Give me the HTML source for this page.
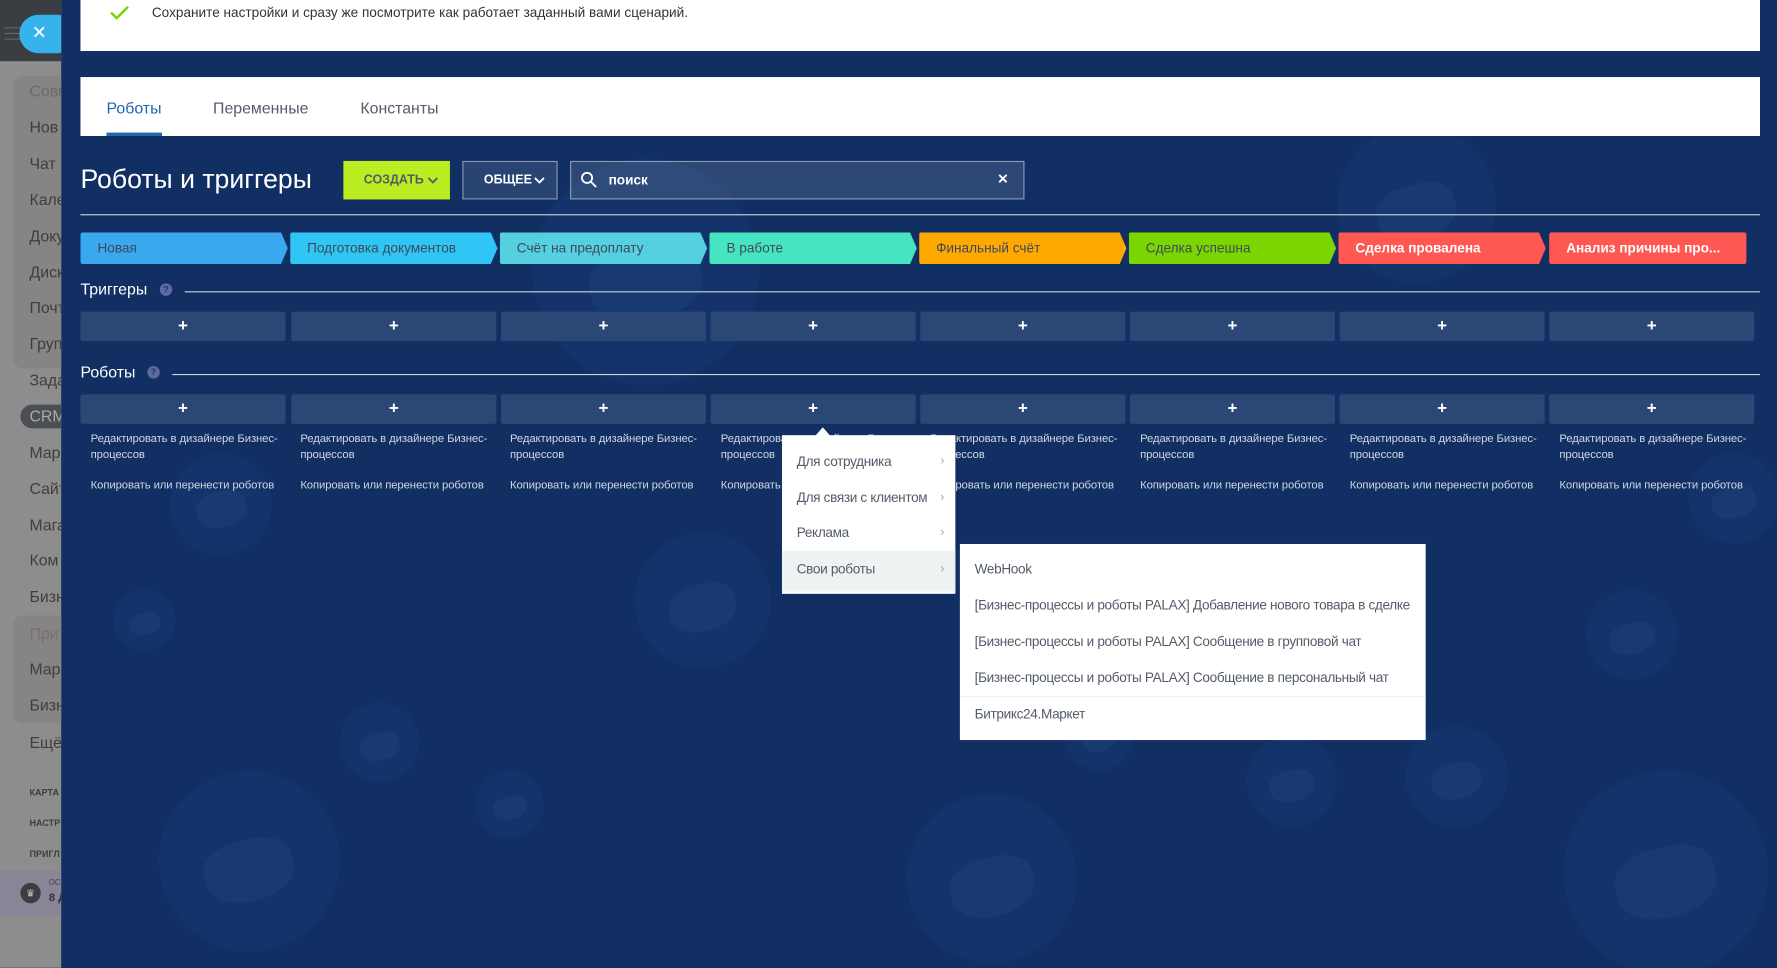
<!DOCTYPE html>
<html><head><meta charset="utf-8">
<style>
html,body{margin:0;padding:0;width:1777px;height:968px;overflow:hidden;background:#112f63;}
#s{position:absolute;left:0;top:0;width:1568px;height:854px;transform:scale(1.13329);transform-origin:0 0;font-family:"Liberation Sans",sans-serif;overflow:hidden;background:#112f63;}
.a{position:absolute;}
.side{left:0;top:0;width:54px;height:854px;background:#8d8d8d;overflow:hidden;}
.side .it{position:absolute;left:26px;font-size:14px;color:#3e3e3e;white-space:nowrap;}
.side .sm{position:absolute;left:26px;font-size:8px;font-weight:bold;color:#3e3e3e;white-space:nowrap;}
.wm{position:absolute;border-radius:50%;background:#13336a;}
.wm i{position:absolute;left:25%;top:38%;width:50%;height:34%;background:#183a70;border-radius:40% 40% 45% 45%;transform:rotate(-15deg);}
.stage{position:absolute;top:205px;height:28px;width:183px;font-size:12px;line-height:28px;padding-left:15px;box-sizing:border-box;color:#3e4a5a;clip-path:polygon(0 0,calc(100% - 6px) 0,100% 50%,calc(100% - 6px) 100%,0 100%);border-radius:2px;white-space:nowrap;}
.box{position:absolute;height:26px;width:181px;background:#2a4775;border-radius:2px;color:#fff;font-size:15px;font-weight:bold;text-align:center;line-height:26px;}
.lk{position:absolute;font-size:10px;color:#d0d7e2;line-height:14px;width:170px;letter-spacing:-0.1px;}
.mi{position:absolute;left:0;width:153px;height:32px;line-height:32px;padding-left:13px;box-sizing:border-box;font-size:12px;color:#535c69;letter-spacing:-0.3px;}
.mi b{position:absolute;right:10px;top:0;font-weight:normal;color:#a0a6ad;font-size:11px;}
.si{position:absolute;left:13px;font-size:12px;color:#535c69;white-space:nowrap;letter-spacing:-0.3px;}
</style></head><body>
<div id="s">
<div class="wm" style="left:470px;top:140px;width:200px;height:200px"><i></i></div>
<div class="wm" style="left:1180px;top:110px;width:140px;height:140px"><i></i></div>
<div class="wm" style="left:560px;top:470px;width:120px;height:120px"><i></i></div>
<div class="wm" style="left:140px;top:680px;width:160px;height:160px"><i></i></div>
<div class="wm" style="left:800px;top:700px;width:150px;height:150px"><i></i></div>
<div class="wm" style="left:1380px;top:680px;width:180px;height:180px"><i></i></div>
<div class="wm" style="left:150px;top:400px;width:90px;height:90px"><i></i></div>
<div class="wm" style="left:300px;top:620px;width:70px;height:70px"><i></i></div>
<div class="wm" style="left:1100px;top:650px;width:80px;height:80px"><i></i></div>
<div class="wm" style="left:1240px;top:640px;width:90px;height:90px"><i></i></div>
<div class="wm" style="left:420px;top:680px;width:60px;height:60px"><i></i></div>
<div class="wm" style="left:100px;top:520px;width:55px;height:55px"><i></i></div>
<div class="wm" style="left:1400px;top:520px;width:80px;height:80px"><i></i></div>
<div class="wm" style="left:940px;top:620px;width:60px;height:60px"><i></i></div>
<div class="wm" style="left:1490px;top:400px;width:80px;height:80px"><i></i></div>

<div class="a side">
 <div class="a" style="left:0;top:0;width:54px;height:54px;background:#3a3d42"></div>
 <div class="a" style="left:4px;top:24px;width:14px;height:1px;background:#666"></div>
 <div class="a" style="left:4px;top:29px;width:14px;height:1px;background:#666"></div>
 <div class="a" style="left:4px;top:34px;width:14px;height:1px;background:#666"></div>
 <div class="a" style="left:17px;top:13px;width:50px;height:34px;border-radius:17px;background:#36b3ea;color:#fff;font-size:16px;line-height:33px;padding-left:11px;box-sizing:border-box">✕</div>
 <div class="a" style="left:12px;top:67px;width:60px;height:258px;background:#858585;border-radius:8px"></div>
 <div class="a" style="left:12px;top:543px;width:60px;height:95px;background:#858585;border-radius:8px"></div>
 <div class="it" style="top:72px;color:#6a6a6a">Совм</div>
 <div class="it" style="top:104px">Нов</div>
 <div class="it" style="top:136px">Чат</div>
 <div class="it" style="top:168px">Кале</div>
 <div class="it" style="top:200px">Доку</div>
 <div class="it" style="top:232px">Диск</div>
 <div class="it" style="top:263px">Почт</div>
 <div class="it" style="top:295px">Груп</div>
 <div class="it" style="top:327px">Зада</div>
 <div class="a" style="left:18px;top:357px;width:50px;height:21px;border-radius:11px;background:#4b4e53"></div>
 <div class="it" style="top:359px;color:#aaa">CRM</div>
 <div class="it" style="top:391px">Мар</div>
 <div class="it" style="top:423px">Сайт</div>
 <div class="it" style="top:455px">Мага</div>
 <div class="it" style="top:486px">Ком</div>
 <div class="it" style="top:518px">Бизн</div>
 <div class="it" style="top:551px;color:#7a6e6e">При</div>
 <div class="it" style="top:582px">Мар</div>
 <div class="it" style="top:614px">Бизн</div>
 <div class="it" style="top:647px">Ещё</div>
 <div class="sm" style="top:695px">КАРТА</div>
 <div class="sm" style="top:722px">НАСТР</div>
 <div class="sm" style="top:749px">ПРИГЛ</div>
 <div class="a" style="left:0;top:768px;width:54px;height:40px;background:#8a8596"></div>
 <div class="a" style="left:18px;top:779px;width:18px;height:18px;border-radius:50%;background:#3a3d42;color:#ccc;font-size:9px;text-align:center;line-height:18px">♛</div>
 <div class="a" style="left:43px;top:776px;font-size:7px;color:#444;white-space:nowrap">ОС</div>
 <div class="a" style="left:43px;top:787px;font-size:10px;font-weight:bold;color:#333;white-space:nowrap">8 Д</div>
</div>

<div class="a" style="left:71px;top:0;width:1482px;height:45px;background:#fff"></div>
<svg class="a" style="left:97px;top:4px" width="18" height="14"><path d="M1 7 L6 12 L16 2" fill="none" stroke="#7bd500" stroke-width="2.2"/></svg>
<div class="a" style="left:134px;top:4px;font-size:12px;color:#333">Сохраните настройки и сразу же посмотрите как работает заданный вами сценарий.</div>

<div class="a" style="left:71px;top:68px;width:1482px;height:52px;background:#fff"></div>
<div class="a" style="left:94px;top:87px;font-size:14px;color:#2067b0">Роботы</div>
<div class="a" style="left:94px;top:117px;width:49px;height:3px;background:#2067b0"></div>
<div class="a" style="left:188px;top:87px;font-size:14px;color:#535c69">Переменные</div>
<div class="a" style="left:318px;top:87px;font-size:14px;color:#535c69">Константы</div>

<div class="a" style="left:71px;top:145px;font-size:23.5px;color:#fff">Роботы и триггеры</div>
<div class="a" style="left:303px;top:142px;width:94px;height:34px;background:#bbed21;color:#535c69;font-size:11px;font-weight:bold;line-height:34px;padding-left:18px;box-sizing:border-box">СОЗДАТЬ</div>
<svg class="a" style="left:377px;top:155px" width="10" height="8"><path d="M1 2 L5 6 L9 2" fill="none" stroke="#535c69" stroke-width="1.6"/></svg>
<div class="a" style="left:408px;top:142px;width:84px;height:34px;box-sizing:border-box;border:1px solid rgba(255,255,255,.45);background:rgba(255,255,255,.1);color:#fff;font-size:11px;font-weight:bold;line-height:32px;padding-left:18px">ОБЩЕЕ</div>
<svg class="a" style="left:471px;top:155px" width="10" height="8"><path d="M1 2 L5 6 L9 2" fill="none" stroke="#fff" stroke-width="1.6"/></svg>
<div class="a" style="left:503px;top:142px;width:401px;height:34px;box-sizing:border-box;border:1px solid rgba(255,255,255,.45);background:rgba(255,255,255,.12)"></div>
<svg class="a" style="left:512px;top:151px" width="16" height="16"><circle cx="6" cy="6" r="4.5" fill="none" stroke="#fff" stroke-width="1.6"/><line x1="9.5" y1="9.5" x2="14" y2="14" stroke="#fff" stroke-width="1.6"/></svg>
<div class="a" style="left:537px;top:152px;font-size:12px;font-weight:bold;color:#fff">поиск</div>
<div class="a" style="left:880px;top:151px;font-size:12px;font-weight:bold;color:#fff">✕</div>
<div class="a" style="left:71px;top:189px;width:1482px;height:1px;background:#c9d1df"></div>

<div class="stage" style="left:71px;background:#39a8ef">Новая</div>
<div class="stage" style="left:256px;background:#2fc6f6">Подготовка документов</div>
<div class="stage" style="left:441px;background:#55d0e0">Счёт на предоплату</div>
<div class="stage" style="left:626px;background:#47e4c2">В работе</div>
<div class="stage" style="left:811px;background:#ffa900">Финальный счёт</div>
<div class="stage" style="left:996px;background:#7bd500">Сделка успешна</div>
<div class="stage" style="left:1181px;background:#ff5752;color:#fff;font-weight:bold">Сделка провалена</div>
<div class="stage" style="left:1367px;width:174px;background:#ff5752;color:#fff;font-weight:bold;clip-path:none">Анализ причины про...</div>

<div class="a" style="left:71px;top:247px;font-size:14px;color:#fff">Триггеры</div>
<div class="a" style="left:141px;top:250px;width:11px;height:11px;border-radius:50%;background:#5e6aa0;color:#23356b;font-size:8px;font-weight:bold;text-align:center;line-height:11px">?</div>
<div class="a" style="left:163px;top:257px;width:1390px;height:1px;background:#c9d1df"></div>
<div class="box" style="left:71px;top:275px">+</div>
<div class="box" style="left:257px;top:275px">+</div>
<div class="box" style="left:442px;top:275px">+</div>
<div class="box" style="left:627px;top:275px">+</div>
<div class="box" style="left:812px;top:275px">+</div>
<div class="box" style="left:997px;top:275px">+</div>
<div class="box" style="left:1182px;top:275px">+</div>
<div class="box" style="left:1367px;top:275px">+</div>

<div class="a" style="left:71px;top:320px;font-size:14px;color:#fff">Роботы</div>
<div class="a" style="left:130px;top:323px;width:11px;height:11px;border-radius:50%;background:#5e6aa0;color:#23356b;font-size:8px;font-weight:bold;text-align:center;line-height:11px">?</div>
<div class="a" style="left:152px;top:330px;width:1401px;height:1px;background:#c9d1df"></div>
<div class="box" style="left:71px;top:348px">+</div>
<div class="box" style="left:257px;top:348px">+</div>
<div class="box" style="left:442px;top:348px">+</div>
<div class="box" style="left:627px;top:348px">+</div>
<div class="box" style="left:812px;top:348px">+</div>
<div class="box" style="left:997px;top:348px">+</div>
<div class="box" style="left:1182px;top:348px">+</div>
<div class="box" style="left:1367px;top:348px">+</div>

<div class="lk" style="left:80px;top:381px">Редактировать в дизайнере Бизнес-процессов</div><div class="lk" style="left:80px;top:422px">Копировать или перенести роботов</div>
<div class="lk" style="left:265px;top:381px">Редактировать в дизайнере Бизнес-процессов</div><div class="lk" style="left:265px;top:422px">Копировать или перенести роботов</div>
<div class="lk" style="left:450px;top:381px">Редактировать в дизайнере Бизнес-процессов</div><div class="lk" style="left:450px;top:422px">Копировать или перенести роботов</div>
<div class="lk" style="left:636px;top:381px">Редактировать в дизайнере Бизнес-процессов</div><div class="lk" style="left:636px;top:422px">Копировать или перенести роботов</div>
<div class="lk" style="left:821px;top:381px">Редактировать в дизайнере Бизнес-процессов</div><div class="lk" style="left:821px;top:422px">Копировать или перенести роботов</div>
<div class="lk" style="left:1006px;top:381px">Редактировать в дизайнере Бизнес-процессов</div><div class="lk" style="left:1006px;top:422px">Копировать или перенести роботов</div>
<div class="lk" style="left:1191px;top:381px">Редактировать в дизайнере Бизнес-процессов</div><div class="lk" style="left:1191px;top:422px">Копировать или перенести роботов</div>
<div class="lk" style="left:1376px;top:381px">Редактировать в дизайнере Бизнес-процессов</div><div class="lk" style="left:1376px;top:422px">Копировать или перенести роботов</div>

<div class="a" style="left:719px;top:377px;width:0;height:0;border-left:7px solid transparent;border-right:7px solid transparent;border-bottom:8px solid #fff"></div>
<div class="a" style="left:690px;top:384px;width:153px;height:140px;background:#fff">
 <div class="mi" style="top:7px">Для сотрудника<b>›</b></div>
 <div class="mi" style="top:39px">Для связи с клиентом<b>›</b></div>
 <div class="mi" style="top:70px">Реклама<b>›</b></div>
 <div class="mi" style="top:102px;height:36px;line-height:32px;background:#eef2f3">Свои роботы<b>›</b></div>
</div>
<div class="a" style="left:847px;top:480px;width:411px;height:173px;background:#fff">
 <div class="si" style="top:15px">WebHook</div>
 <div class="si" style="top:47px">[Бизнес-процессы и роботы PALAX] Добавление нового товара в сделке</div>
 <div class="si" style="top:79px">[Бизнес-процессы и роботы PALAX] Сообщение в групповой чат</div>
 <div class="si" style="top:111px">[Бизнес-процессы и роботы PALAX] Сообщение в персональный чат</div>
 <div class="a" style="left:0;top:134px;width:411px;height:1px;background:#edf0f2"></div>
 <div class="si" style="top:143px">Битрикс24.Маркет</div>
</div>
</div>
</body></html>
